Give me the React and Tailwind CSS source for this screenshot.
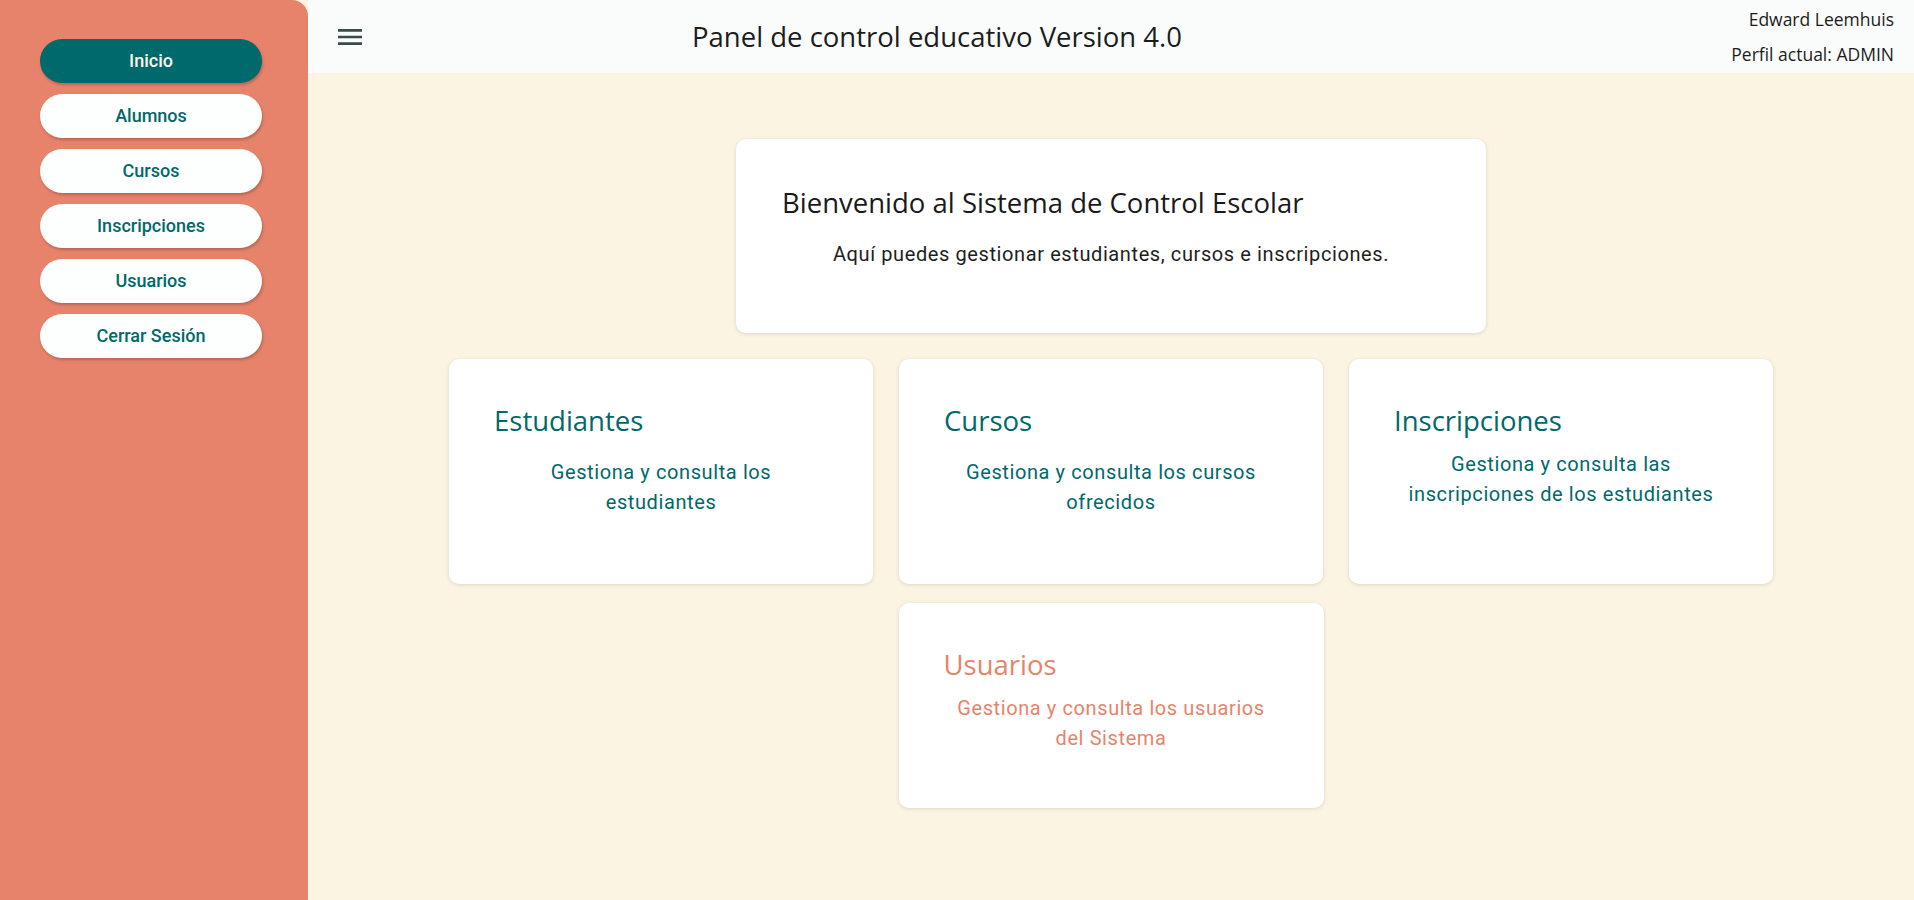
import { useState } from 'react';

const navItems = ['Inicio', 'Alumnos', 'Cursos', 'Inscripciones', 'Usuarios', 'Cerrar Sesión'];

const cards = [
  { title: 'Estudiantes', text: 'Gestiona y consulta los estudiantes', gap: 'mt-[19px]', tone: 'teal' },
  { title: 'Cursos', text: 'Gestiona y consulta los cursos ofrecidos', gap: 'mt-[19px]', tone: 'teal' },
  { title: 'Inscripciones', text: 'Gestiona y consulta las inscripciones de los estudiantes', gap: 'mt-[11px]', tone: 'teal' },
];

function MenuIcon() {
  return (
    <svg viewBox="0 0 24 24" className="w-8 h-8 fill-[#3b4949]">
      <path d="M3 18h18v-2H3zm0-5h18v-2H3zm0-7v2h18V6z" />
    </svg>
  );
}

function Card({ title, text, gap, tone, className = '' }) {
  const color = tone === 'coral' ? 'text-[#E8836B]' : 'text-[#00696B]';
  return (
    <div className={`bg-white rounded-[10px] shadow-[0_1px_4px_rgba(0,0,0,0.12)] pt-[45px] px-[45px] ${className}`}>
      <h2 className={`font-['Open_Sans',sans-serif] text-[27.5px] leading-[34px] ${color}`}>{title}</h2>
      <p className={`${gap} mx-auto max-w-[322px] text-center font-['Roboto',sans-serif] text-[20px] leading-[30px] tracking-[0.6px] ${color}`}>
        {text}
      </p>
    </div>
  );
}

export default function App() {
  const [active, setActive] = useState('Inicio');

  return (
    <div className="flex min-h-screen bg-[#FBF4E2] font-['Roboto',sans-serif]">
      {/* Sidebar */}
      <aside className="w-[308px] shrink-0 min-h-screen bg-[#E8836B] rounded-tr-[16px] pt-[39px] pl-[40px] flex flex-col gap-[11px]">
        {navItems.map((item) => (
          <button
            key={item}
            onClick={() => setActive(item)}
            className={`w-[222px] h-[44px] rounded-full text-[18px] leading-[44px] font-medium shadow-[1px_2px_3px_rgba(0,0,0,0.22)] ${
              active === item ? 'bg-[#00696B] text-[#FFF8EC]' : 'bg-[#FDFEFE] text-[#00696B]'
            }`}
          >
            {item}
          </button>
        ))}
      </aside>

      <div className="flex-1 flex flex-col">
        {/* Header */}
        <header className="h-[73px] bg-[#FAFCFB] flex items-start pl-[26px] pr-[20px]">
          <button className="mt-[21px]">
            <MenuIcon />
          </button>
          <h1 className="ml-[326px] mt-[20px] font-['Open_Sans',sans-serif] text-[27.5px] leading-[34px] text-[#1c1c1c]">
            Panel de control educativo Version 4.0
          </h1>
          <div className="ml-auto mt-[2px] text-right font-['Open_Sans',sans-serif] text-[17.5px] leading-[34.5px] text-[#1c1c1c]">
            <div>Edward Leemhuis</div>
            <div>Perfil actual: ADMIN</div>
          </div>
        </header>

        {/* Content */}
        <main className="flex flex-col items-center pt-[66px] pb-[40px]">
          <div className="w-[750px] h-[194px] bg-white rounded-[10px] shadow-[0_1px_4px_rgba(0,0,0,0.12)] pt-[47px] px-[46px]">
            <h2 className="font-['Open_Sans',sans-serif] text-[27.5px] leading-[34px] text-[#1a1a1a]">
              Bienvenido al Sistema de Control Escolar
            </h2>
            <p className="mt-[19px] text-center text-[20px] leading-[30px] tracking-[0.6px] text-[#1e1e1e]">
              Aquí puedes gestionar estudiantes, cursos e inscripciones.
            </p>
          </div>

          <div className="mt-[26px] grid grid-cols-[repeat(3,424px)] gap-x-[26px]">
            {cards.map((c) => (
              <Card key={c.title} {...c} className="h-[225px]" />
            ))}
          </div>

          <Card
            title="Usuarios"
            text="Gestiona y consulta los usuarios del Sistema"
            gap="mt-[11px]"
            tone="coral"
            className="mt-[19px] w-[425px] h-[205px]"
          />
        </main>
      </div>
    </div>
  );
}
